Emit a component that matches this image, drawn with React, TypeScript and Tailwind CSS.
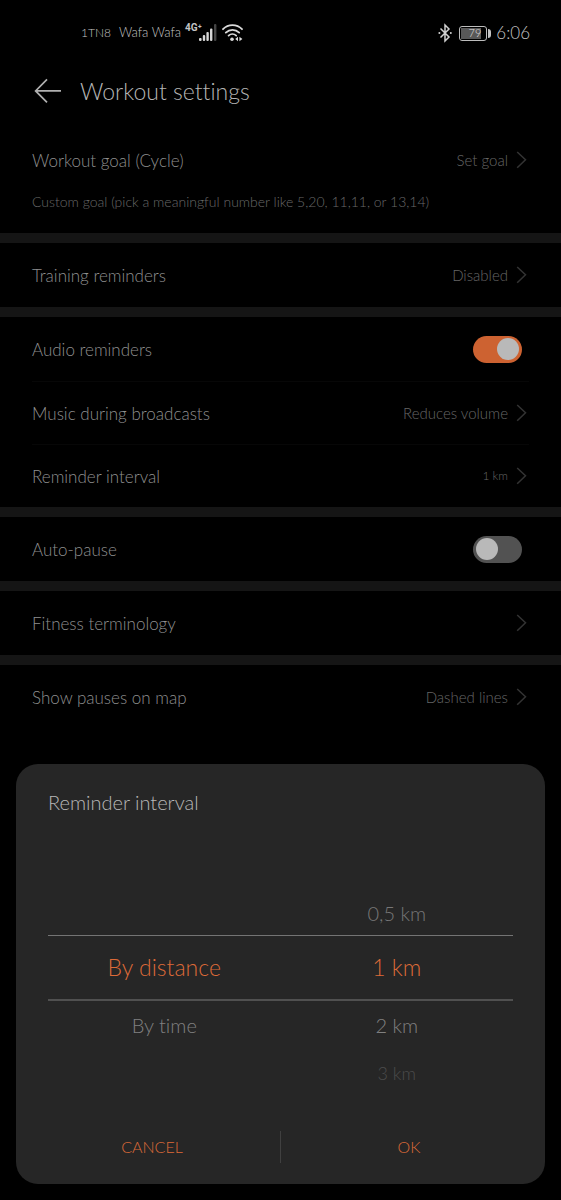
import { useState, type ReactNode } from "react";

function Chevron() {
  return (
    <svg className="mr-[2px] ml-2 h-[18px] w-[11px] shrink-0" viewBox="0 0 11 18" fill="none" stroke="#333333" strokeWidth="1.5" aria-hidden="true">
      <path d="M1.2 1L9.5 8.8L1.2 16.8" />
    </svg>
  );
}

function LinkRow({ label, value, small }: { label: string; value?: string; small?: boolean }) {
  return (
    <button type="button" className="flex h-full w-full items-center px-8 text-left">
      <span className="flex-1 pt-0.5 text-[17px] text-[#8f8f8f]">{label}</span>
      {value && <span className={small ? "text-[12px] text-[#666666]" : "text-[15px] text-[#666666]"}>{value}</span>}
      <Chevron />
    </button>
  );
}

function SwitchRow({ label, initial }: { label: string; initial: boolean }) {
  const [on, setOn] = useState(initial);
  return (
    <label className="flex h-full items-center pr-[39px] pl-8">
      <span className="flex-1 pt-0.5 text-[17px] text-[#8f8f8f]">{label}</span>
      <input
        type="checkbox"
        role="switch"
        checked={on}
        onChange={(e) => setOn(e.target.checked)}
        className="flex h-[27px] w-[49px] appearance-none items-center rounded-full bg-[#525252] px-[3px] before:block before:size-[22px] before:rounded-full before:bg-[#b9b9b9] before:content-[''] checked:justify-end checked:bg-[#cd6231]"
      />
    </label>
  );
}

function Section({ children }: { children: ReactNode }) {
  return <section className="border-t-10 border-[#151515]">{children}</section>;
}

const PICKER_ROWS = [
  "h-11 text-[20px] text-[#777777]",
  "h-[66px] border-t border-b-2 border-t-[#747474] border-b-[#505050] text-[23px] text-[#dd6a38]",
  "h-12 text-[20px] text-[#808080]",
  "h-12 text-[18px] text-[#4c4c4c]",
];

function Picker({ label, options }: { label: string; options: string[] }) {
  return (
    <div role="listbox" aria-label={label} className="flex flex-1 flex-col">
      {options.map((option, i) => (
        <button
          key={i}
          type="button"
          role="option"
          aria-selected={i === 1}
          disabled={!option}
          className={`flex items-center justify-center ${PICKER_ROWS[i]}`}
        >
          {option}
        </button>
      ))}
    </div>
  );
}

function StatusBar() {
  return (
    <div className="flex h-[66px] items-center pr-[31px] pl-[81px] text-[#c4c4c4]">
      <span className="text-[12px]">1TN8</span>
      <span className="ml-2 text-[13px]">Wafa Wafa</span>
      <span className="mb-3 ml-1 font-['Roboto',sans-serif] text-[10px] font-bold">4G⁺</span>
      <svg className="-ml-[3px] h-[18px] w-[18px]" viewBox="0 0 18 18" fill="#d6d6d6" aria-hidden="true">
        <rect x="0" y="14" width="2.6" height="3" rx="1" />
        <rect x="3.8" y="11" width="2.4" height="6" rx="1" />
        <rect x="7.4" y="8" width="2.4" height="9" rx="1" />
        <rect x="11" y="4.5" width="2.4" height="12.5" rx="1" />
        <rect x="15" y="0" width="2.4" height="17" rx="1" fill="#444" />
      </svg>
      <svg className="ml-[5px] h-[18px] w-[21px]" viewBox="0 0 21 18" fill="none" stroke="#dadada" strokeWidth="1.8" strokeLinecap="round" aria-hidden="true">
        <path d="M1 5.2C6.2 -0.2 14.8 -0.2 20 5.2" />
        <path d="M3.8 8.6C7.6 4.9 13.4 4.9 17.2 8.6" />
        <path d="M6.6 11.6C8.8 9.6 12 9.6 14.2 11.6" />
        <circle cx="10" cy="15.3" r="1.8" fill="#dadada" stroke="none" />
        <path d="M16 12.8V17.2L13.2 15Z M17.4 12.8V17.2L20.4 15Z" fill="#dadada" stroke="none" />
      </svg>
      <svg className="ml-auto h-[20px] w-[14px]" viewBox="0 0 14 20" fill="none" stroke="#d0d0d0" strokeWidth="1.5" aria-hidden="true">
        <path d="M2.5 5.5L11 14L7 18V2L11 6L2.5 14.5" />
        <circle cx="1.4" cy="10" r="1" fill="#d0d0d0" stroke="none" />
        <circle cx="12.8" cy="10" r="1" fill="#d0d0d0" stroke="none" />
      </svg>
      <span className="ml-[7px] flex h-[15px] w-[28px] items-center rounded-[3px] border border-[#bdbdbd] p-px">
        <span className="flex h-full w-5 items-center justify-end bg-[#585858] text-[11px] text-[#e0e0e0]">79</span>
      </span>
      <span className="ml-px h-[9px] w-[3px] rounded-r-sm bg-[#c4c4c4]" />
      <span className="ml-[5px] text-[17px]">6:06</span>
    </div>
  );
}

export default function App() {
  return (
    <div className="flex min-h-screen flex-col bg-black pb-4 font-['Lato',sans-serif] font-light [font-variant-ligatures:none]">
      <StatusBar />
      <header className="flex h-[50px] items-center px-[34px]">
        <button type="button" aria-label="Back">
          <svg className="h-[26px] w-[28px]" viewBox="0 0 28 26" fill="none" stroke="#b0b0b0" strokeWidth="1.7" aria-hidden="true">
            <path d="M13 1.4L1.6 12.9L13 24.4M1.6 12.9H27" />
          </svg>
        </button>
        <h1 className="ml-[18px] text-[23px] text-[#b5b5b5]">Workout settings</h1>
      </header>
      <main>
        <section className="flex h-[117px] flex-col pt-3">
          <div className="h-16">
            <LinkRow label="Workout goal (Cycle)" value="Set goal" />
          </div>
          <p className="px-8 text-[14px] leading-5 text-[#686868]">
            Custom goal (pick a meaningful number like 5,20, 11,11, or 13,14)
          </p>
        </section>
        <Section>
          <div className="h-16">
            <LinkRow label="Training reminders" value="Disabled" />
          </div>
        </Section>
        <Section>
          <div className="h-16">
            <SwitchRow label="Audio reminders" initial={true} />
          </div>
          <div className="mx-8 h-px bg-[#070707]" />
          <div className="h-[62px]">
            <LinkRow label="Music during broadcasts" value="Reduces volume" />
          </div>
          <div className="mx-8 h-px bg-[#070707]" />
          <div className="h-[62px]">
            <LinkRow label="Reminder interval" value="1 km" small />
          </div>
        </Section>
        <Section>
          <div className="h-16">
            <SwitchRow label="Auto-pause" initial={false} />
          </div>
        </Section>
        <Section>
          <div className="h-16">
            <LinkRow label="Fitness terminology" />
          </div>
        </Section>
        <Section>
          <div className="h-16">
            <LinkRow label="Show pauses on map" value="Dashed lines" />
          </div>
        </Section>
      </main>
      <div role="dialog" aria-labelledby="interval-title" className="mx-4 mt-auto rounded-[22px] bg-[#262626] px-8 pt-6 pb-[21px]">
        <h2 id="interval-title" className="text-[20px] leading-7 text-[#b8b8b8]">
          Reminder interval
        </h2>
        <div className="mt-[75px] flex">
          <Picker label="Interval type" options={["", "By distance", "By time", ""]} />
          <Picker label="Interval value" options={["0,5 km", "1 km", "2 km", "3 km"]} />
        </div>
        <div className="-mx-6 mt-[34px] flex h-8 items-center text-[16px] text-[#dd6a38]">
          <button type="button" className="h-full flex-1">CANCEL</button>
          <span className="h-full w-px bg-[#404040]" />
          <button type="button" className="h-full flex-1">OK</button>
        </div>
      </div>
    </div>
  );
}
